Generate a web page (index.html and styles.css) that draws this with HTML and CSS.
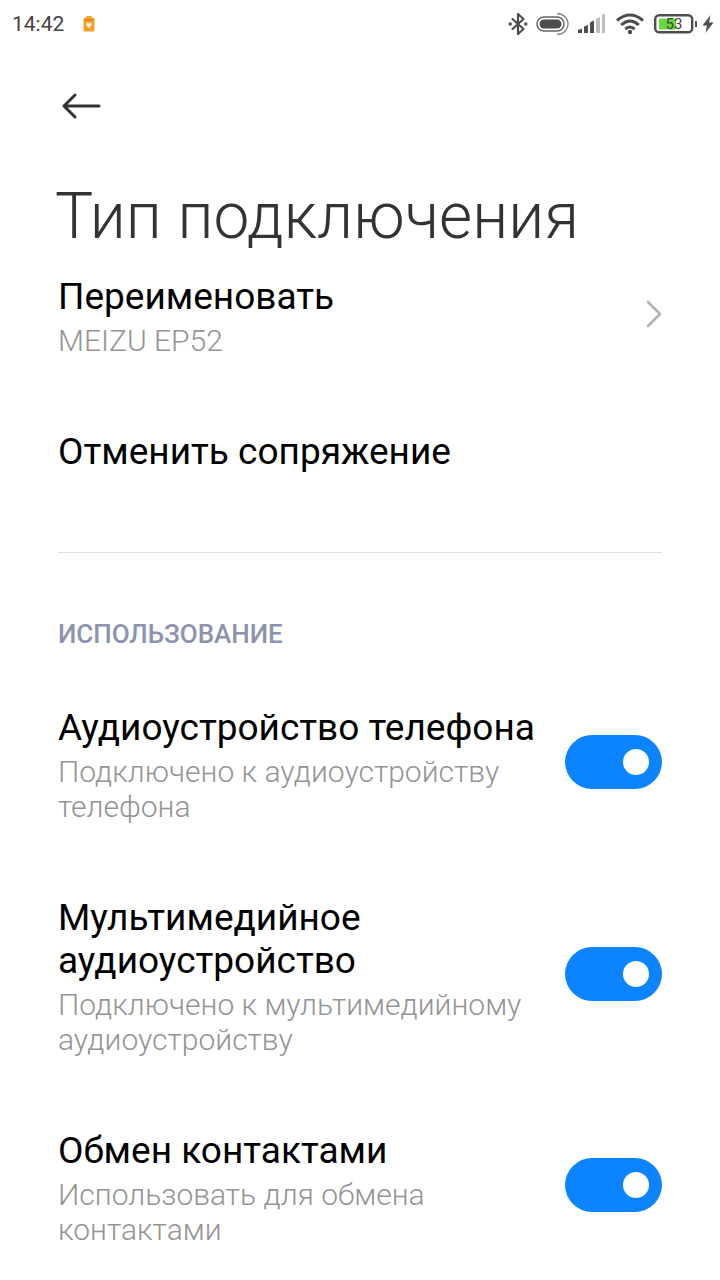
FILE: index.html
```html
<!DOCTYPE html>
<html lang="ru">
<head>
<meta charset="utf-8">
<meta name="viewport" content="width=device-width, initial-scale=1">
<title>Тип подключения</title>
<link rel="stylesheet" href="styles.css">
</head>
<body>
<div class="status">
  <time class="clock">14:42</time>
  <svg class="saver" width="12" height="16" viewBox="0 0 12 16" aria-hidden="true"><path fill="#f3a12b" d="M3.500 0h5v1.500h1.500a1.500 1.500 0 0 1 1.500 1.500v11a1.500 1.500 0 0 1-1.500 1.500h-8a1.500 1.500 0 0 1-1.500-1.500v-11a1.500 1.500 0 0 1 1.500-1.500h1.500z"/><path fill="#c97a12" d="M1.500 3.500h9v1h-9z"/><path fill="#fff4dc" d="M6 7.500C7 6 9 7 8.500 9 8 10.500 7 11 6 12 5 11 4 10.500 3.500 9 3 7 5 6 6 7.500z"/></svg>
  <div class="indicators">
    <svg width="20" height="24" viewBox="0 0 20 24" aria-hidden="true"><path d="M4.500 7l11 10-5.500 5V2l5.500 5-11 10" fill="none" stroke="#4d4d4d" stroke-width="2.200" stroke-linejoin="round" stroke-linecap="round"/><circle cx="2.200" cy="12" r="1.700" fill="#4d4d4d"/><circle cx="17.800" cy="12" r="1.700" fill="#4d4d4d"/></svg>
    <svg class="buds" width="34" height="24" viewBox="0 0 34 24" aria-hidden="true"><path d="M21 1.500a11 10.500 0 1 1 0 21" fill="none" stroke="#8a8a8a" stroke-width="1.300"/><rect x="1" y="5" width="27" height="14" rx="7" fill="#fff" stroke="#666" stroke-width="1.500"/><rect x="3.500" y="7.500" width="22" height="9" rx="4.500" fill="#4d4d4d"/></svg>
    <svg class="signal" width="28" height="24" viewBox="0 0 28 24" aria-hidden="true"><path fill="#4d4d4d" d="M0 18l4-1.500V21H0zM6 14.500l4-1.500v8H6zM12 10.500l4-2v12.500h-4z"/><path fill="#bdbdbd" d="M18 7l4-2v16h-4zM24 3l3-1.500V21h-3z"/></svg>
    <svg class="wifi" width="28" height="24" viewBox="0 0 28 24" aria-hidden="true"><g fill="none" stroke="#4d4d4d" stroke-width="3"><path d="M1 8.500q13-11 26 0"/><path d="M5.200 13q8.800-8 17.600 0"/><path d="M9.300 17.200q4.700-4.400 9.400 0"/></g><circle cx="14" cy="20" r="2.200" fill="#4d4d4d"/></svg>
    <div class="battery">
      <svg width="44" height="20" viewBox="0 0 44 20" aria-hidden="true"><rect x="1.200" y="1.200" width="37" height="17" rx="4" fill="#fff" stroke="#4d4d4d" stroke-width="2.400"/><rect x="5" y="4.500" width="17" height="11" rx="1" fill="#68d93a"/><path d="M41 7h1.500a.5.500 0 0 1 .5.500v5a.5.500 0 0 1-.5.500H41z" fill="#4d4d4d"/></svg>
      <span class="percent">53</span>
    </div>
    <svg class="bolt" width="12" height="20" viewBox="0 0 12 20" aria-hidden="true"><path fill="#4d4d4d" d="M8.500 1L.5 11.500h4.500L3.500 19l8-10.500H7z"/></svg>
  </div>
</div>

<main class="page">
  <button class="back" type="button" aria-label="Назад">
    <svg width="40" height="26" viewBox="0 0 40 26" aria-hidden="true"><path d="M13 2L2 13l11 11M2 13h35" fill="none" stroke="#333" stroke-width="3" stroke-linecap="round" stroke-linejoin="round"/></svg>
  </button>
  <h1 class="heading">Тип подключения</h1>

  <button class="row row-first" type="button">
    <span class="text"><span class="title">Переименовать</span><span class="sub">MEIZU EP52</span></span>
    <svg class="chevron" width="16" height="28" viewBox="0 0 16 28" aria-hidden="true"><path d="M2 2l12 12L2 26" fill="none" stroke="#b2b2b2" stroke-width="2.600" stroke-linecap="round" stroke-linejoin="round"/></svg>
  </button>
  <button class="row" type="button">
    <span class="text"><span class="title">Отменить сопряжение</span></span>
  </button>

  <hr class="divider">
  <h2 class="section">ИСПОЛЬЗОВАНИЕ</h2>

  <label class="row">
    <span class="text"><span class="title">Аудиоустройство телефона</span><span class="sub">Подключено к аудиоустройству телефона</span></span>
    <input class="switch" type="checkbox" role="switch" checked>
  </label>
  <label class="row">
    <span class="text"><span class="title">Мультимедийное аудиоустройство</span><span class="sub">Подключено к мультимедийному аудиоустройству</span></span>
    <input class="switch" type="checkbox" role="switch" checked>
  </label>
  <label class="row">
    <span class="text"><span class="title">Обмен контактами</span><span class="sub">Использовать для обмена контактами</span></span>
    <input class="switch" type="checkbox" role="switch" checked>
  </label>
</main>
</body>
</html>
```
FILE: styles.css
```css
* {
  box-sizing: border-box;
}

body {
  margin: 0;
  background: #fff;
  color: #000;
  font-family: Roboto, "Noto Sans", sans-serif;
}

.status {
  display: flex;
  align-items: center;
  height: 48px;
  padding: 0 6px 0 12px;
}

.clock {
  font-size: 21px;
  line-height: 26px;
  color: #444;
}

.saver {
  margin-left: 19px;
}

.indicators {
  display: flex;
  align-items: center;
  margin-left: auto;
}

.buds {
  margin-left: 8px;
}

.signal {
  margin-left: 8px;
}

.wifi {
  margin-left: 10px;
}

.battery {
  display: grid;
  align-items: center;
  margin-left: 10px;
}

.battery > * {
  grid-area: 1 / 1;
}

.percent {
  width: 40px;
  font-size: 15px;
  line-height: 20px;
  text-align: center;
  color: #444;
}

.bolt {
  margin-left: 4px;
}

.page {
  padding: 0 58px;
}

.back,
.row {
  border: 0;
  background: none;
  font: inherit;
  color: inherit;
  text-align: left;
  cursor: pointer;
}

.back {
  display: block;
  margin: 45px 0 0 4px;
  padding: 0;
}

.back svg,
.battery svg {
  display: block;
}

.heading {
  margin: 60px 0 0 -3px;
  font-size: 64px;
  line-height: 76px;
  font-weight: 300;
  color: #333;
}

.row {
  display: flex;
  align-items: center;
  gap: 24px;
  width: 100%;
  padding: 33px 0;
}

.row-first {
  padding-top: 14px;
}

.text {
  display: grid;
  gap: 5px;
  flex: 1;
  padding-top: 6px;
}

.title {
  font-size: 37px;
  line-height: 43px;
}

.sub {
  font-size: 30px;
  line-height: 35px;
  font-weight: 300;
  color: #949494;
}

.divider {
  height: 1px;
  margin: 46px 0 0;
  border: 0;
  background: #e0e0e0;
}

.section {
  margin: 65px 0 17px;
  font-size: 26px;
  line-height: 32px;
  font-weight: 500;
  color: #8c93b0;
}

.switch {
  display: grid;
  align-items: center;
  justify-items: end;
  flex: none;
  width: 97px;
  height: 54px;
  margin: 0;
  padding: 0 13px;
  border-radius: 27px;
  background: #d9d9d9;
  appearance: none;
  cursor: pointer;
}

.switch::before {
  content: "";
  width: 26px;
  height: 26px;
  border-radius: 50%;
  background: #fff;
}

.switch:checked {
  background: #0d84ff;
}

.switch:not(:checked) {
  justify-items: start;
}
```
